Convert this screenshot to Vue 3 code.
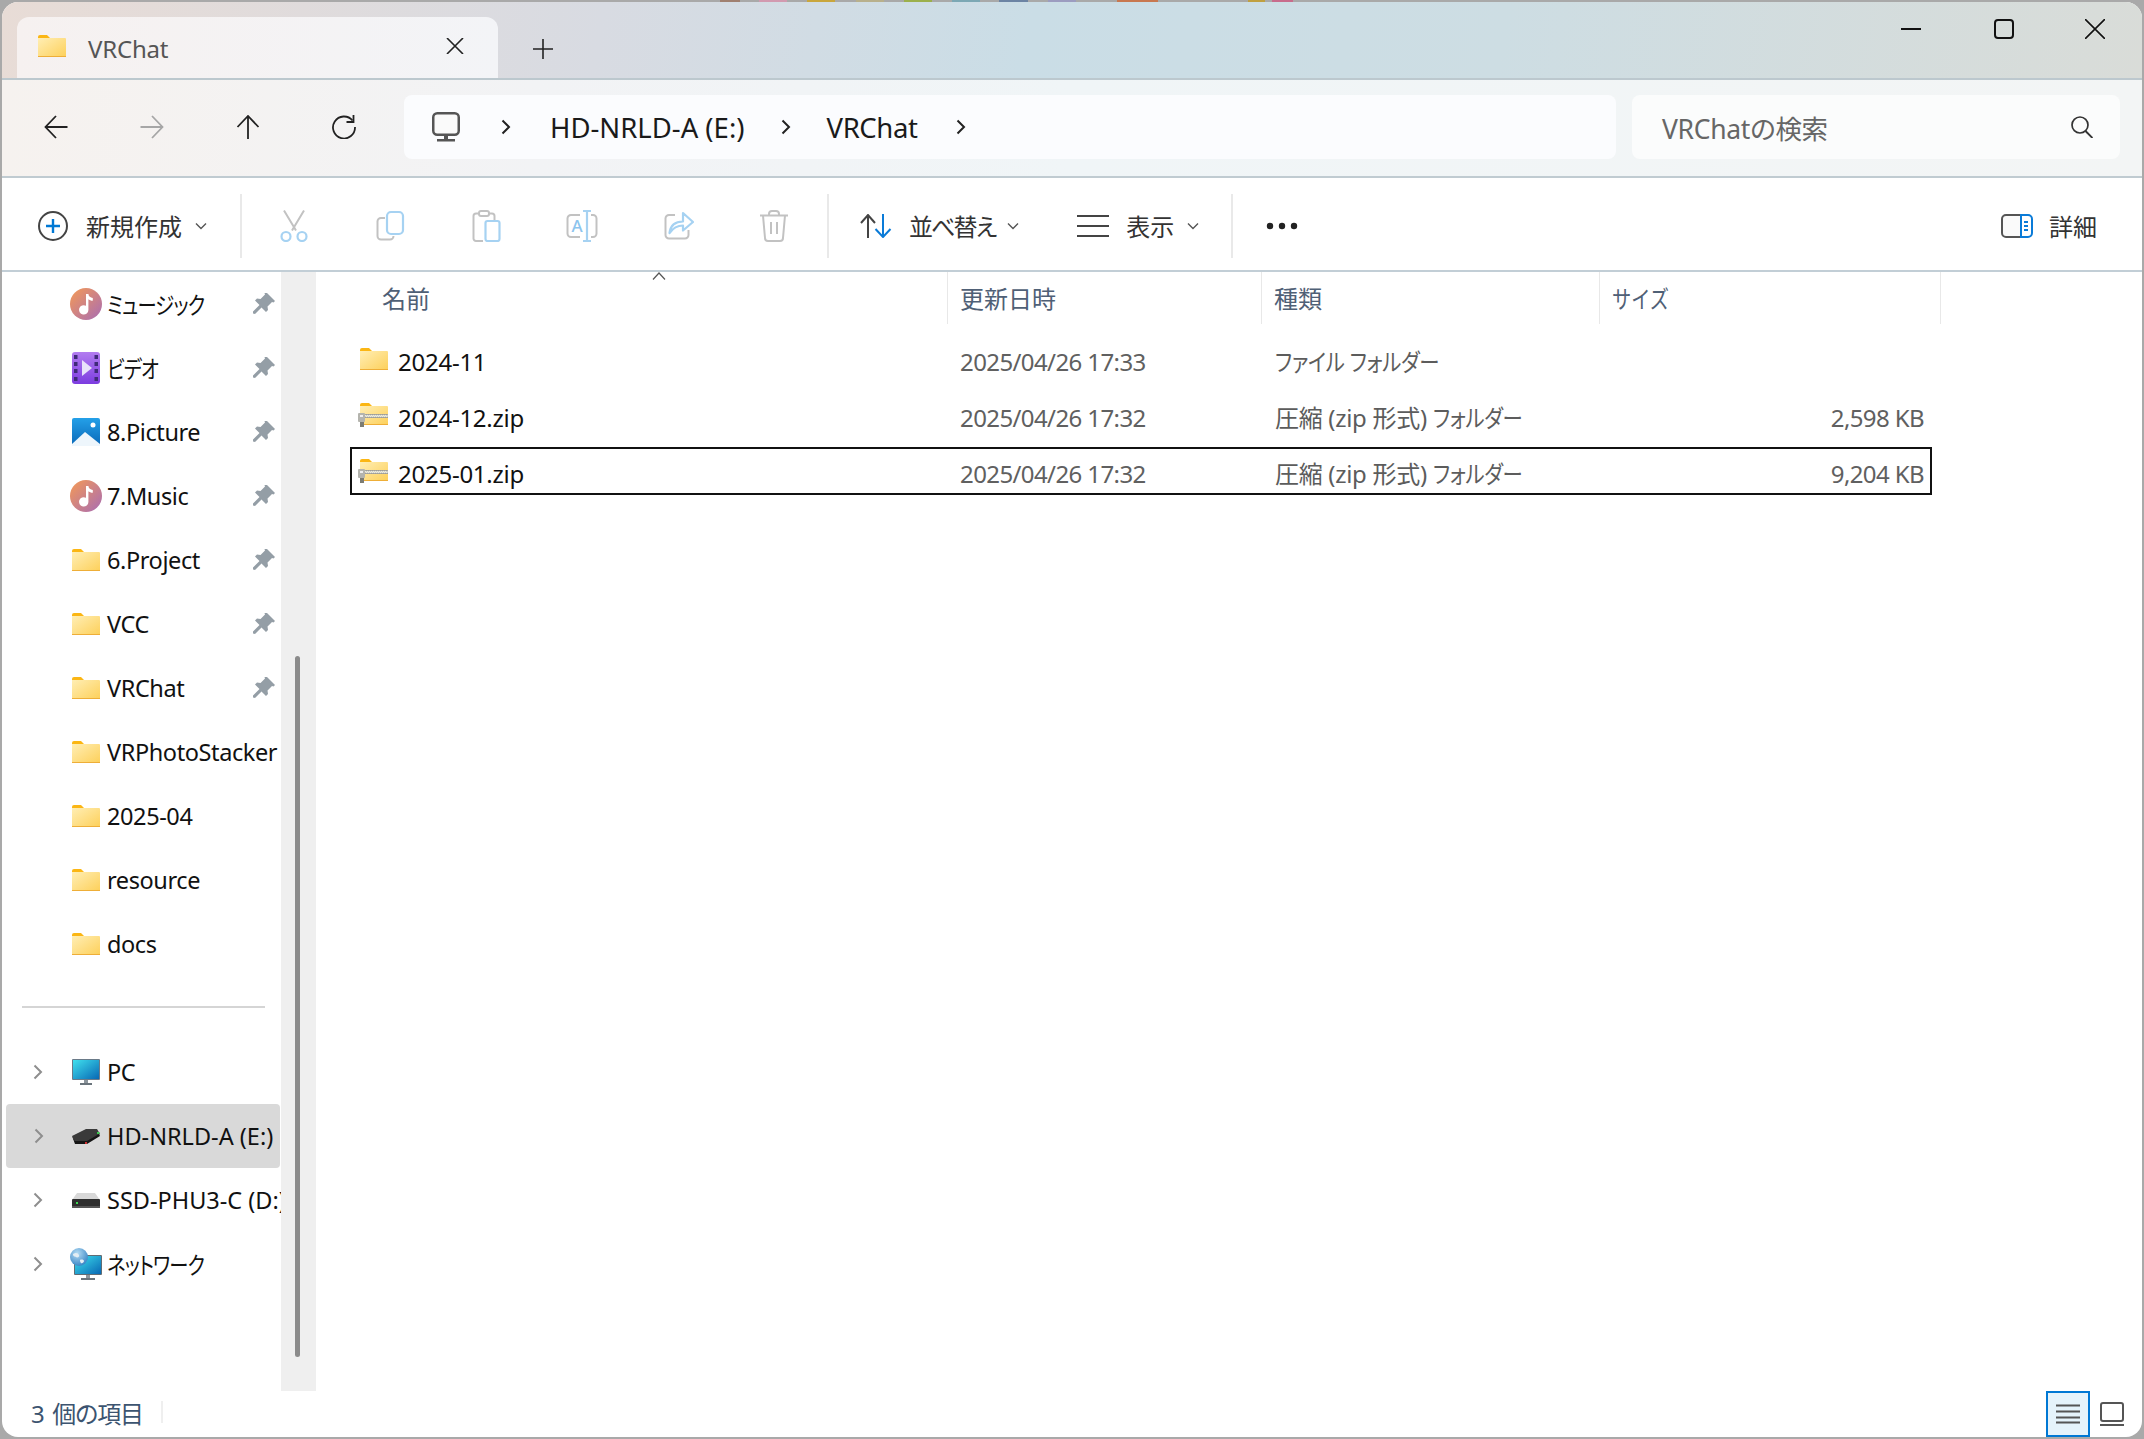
<script setup>
const slivers = [
  { w: 20, gap: 720, c: "#a08070" },
  { w: 28, gap: 19, c: "#d29ab0" },
  { w: 28, gap: 20, c: "#c9a63c" },
  { w: 28, gap: 21, c: "#b8b08c" },
  { w: 28, gap: 20, c: "#9cb04c" },
  { w: 28, gap: 20, c: "#7ca8b4" },
  { w: 29, gap: 19, c: "#6c84a4" },
  { w: 28, gap: 20, c: "#9c9cc0" },
  { w: 41, gap: 41, c: "#c87850" },
  { w: 17, gap: 90, c: "#c0a040" },
  { w: 21, gap: 7, c: "#c86c8c" },
];

const quick = [
  { name: "ミュージック", icon: "music", pin: true, cls: "kana" },
  { name: "ビデオ", icon: "video", pin: true, cls: "kana" },
  { name: "8.Picture", icon: "picture", pin: true },
  { name: "7.Music", icon: "music", pin: true },
  { name: "6.Project", icon: "folder", pin: true },
  { name: "VCC", icon: "folder", pin: true },
  { name: "VRChat", icon: "folder", pin: true },
  { name: "VRPhotoStacker", icon: "folder" },
  { name: "2025-04", icon: "folder" },
  { name: "resource", icon: "folder" },
  { name: "docs", icon: "folder" },
];

const drives = [
  { name: "PC", icon: "pc" },
  { name: "HD-NRLD-A (E:)", icon: "hdd", active: true, cls: "caps" },
  { name: "SSD-PHU3-C (D:)", icon: "ssd", cls: "caps" },
  { name: "ネットワーク", icon: "network", cls: "kana" },
];

const files = [
  { name: "2024-11", icon: "folder", date: "2025/04/26 17:33", typeHead: "", kana: "ファイル フォルダー", size: "" },
  { name: "2024-12.zip", icon: "zip", date: "2025/04/26 17:32", typeHead: "圧縮 (zip 形式)", kana: "フォルダー", size: "2,598 KB" },
  { name: "2025-01.zip", icon: "zip", date: "2025/04/26 17:32", typeHead: "圧縮 (zip 形式)", kana: "フォルダー", size: "9,204 KB", focus: true },
];
</script>

<template>
  <div class="desk">
    <div class="slivers">
      <span
        v-for="(s, i) in slivers"
        :key="i"
        :style="{ width: s.w + 'px', marginLeft: s.gap + 'px', background: s.c }"
      ></span>
    </div>

    <!-- shared icons -->
    <svg class="sprite" width="0" height="0">
      <defs>
        <linearGradient id="fold" x1="0" y1="0" x2="1" y2="1">
          <stop offset="0" stop-color="#ffeeb4" />
          <stop offset="1" stop-color="#fdd05a" />
        </linearGradient>
        <linearGradient id="mus" x1="0" y1="0" x2="1" y2="1">
          <stop offset="0" stop-color="#f59a55" />
          <stop offset="1" stop-color="#a86cb4" />
        </linearGradient>
        <linearGradient id="vid" x1="0" y1="0" x2="0" y2="1">
          <stop offset="0" stop-color="#b27cf0" />
          <stop offset="1" stop-color="#7c3ce0" />
        </linearGradient>
        <linearGradient id="pic" x1="0" y1="0" x2="0" y2="1">
          <stop offset="0" stop-color="#24a0e8" />
          <stop offset="1" stop-color="#0a68b8" />
        </linearGradient>
        <linearGradient id="scr" x1="0" y1="0" x2="1" y2="1">
          <stop offset="0" stop-color="#3fe0ee" />
          <stop offset="1" stop-color="#0868b4" />
        </linearGradient>
        <radialGradient id="globe" cx="0.4" cy="0.3" r="0.8">
          <stop offset="0" stop-color="#b4dcf4" />
          <stop offset="1" stop-color="#2c7cc0" />
        </radialGradient>
      </defs>
      <symbol id="folder" viewBox="0 0 28 22">
        <path d="M0 2a2 2 0 0 1 2-2h7l3 3h-12z" fill="#fbb614" />
        <path d="M0 3h27a1 1 0 0 1 1 1v17a1 1 0 0 1-1 1h-26a1 1 0 0 1-1-1z" fill="url(#fold)" />
        <rect y="21" width="28" height="1" fill="#eeae38" />
      </symbol>
      <symbol id="zip" viewBox="0 0 30 24">
        <path d="M2 2a2 2 0 0 1 2-2h7l3 3h-12z" fill="#fbb614" />
        <path d="M2 3h27a1 1 0 0 1 1 1v17a1 1 0 0 1-1 1h-26a1 1 0 0 1-1-1z" fill="url(#fold)" />
        <rect x="2" y="21" width="28" height="1" fill="#eeae38" />
        <rect x="6" y="11" width="24" height="4" fill="#a8a8a4" />
        <rect x="6" y="12" width="24" height="2" fill="#ecebdf" stroke="#7d7d78" stroke-dasharray="1 1" stroke-width=".5" />
        <rect x="0" y="10" width="7" height="9" rx="1" fill="#b4b4ae" />
        <rect x="2" y="19" width="4" height="5" fill="#7c7c74" />
        <rect x="2" y="12" width="3" height="2" fill="#eee" />
      </symbol>
      <symbol id="music" viewBox="0 0 32 32">
        <circle cx="16" cy="16" r="16" fill="url(#mus)" />
        <path d="M16 6h2.400c.3 2.600 2 3.600 4.400 4v2.800c-1.900 0-3.500-.6-4.400-1.500v10.600a4.700 4.700 0 1 1-2.400-4.100z" fill="#fff" />
      </symbol>
      <symbol id="video" viewBox="0 0 28 32">
        <rect width="28" height="32" rx="3" fill="url(#vid)" />
        <g fill="#3f2a78">
          <rect x="2" y="3" width="3.500" height="4" /><rect x="2" y="10" width="3.500" height="4" />
          <rect x="2" y="17" width="3.500" height="4" /><rect x="2" y="25" width="3.500" height="4" />
          <rect x="22.500" y="3" width="3.500" height="4" /><rect x="22.500" y="10" width="3.500" height="4" />
          <rect x="22.500" y="17" width="3.500" height="4" /><rect x="22.500" y="25" width="3.500" height="4" />
        </g>
        <path d="M10 8l10 8-10 8z" fill="#e8e2fa" />
      </symbol>
      <symbol id="picture" viewBox="0 0 28 28">
        <rect width="28" height="28" rx="2" fill="url(#pic)" />
        <circle cx="21" cy="7" r="2.500" fill="#fff" />
        <path d="M0 26L13 14l15 12v2H0z" fill="#eef6fc" />
      </symbol>
      <symbol id="pc" viewBox="0 0 28 26">
        <rect width="28" height="21" rx="1" fill="#6a7a88" />
        <rect x="1" y="1" width="26" height="19" fill="url(#scr)" />
        <rect x="12" y="21" width="4" height="3" fill="#8c959c" />
        <rect x="8" y="24" width="12" height="2" fill="#6a747c" />
      </symbol>
      <symbol id="hdd" viewBox="0 0 28 15">
        <path d="M0 7L14 0h11l3 5-12 8H3z" fill="#3a3a3a" />
        <path d="M0 7l3 8h12l13-8-1-2-12 7H3z" fill="#151515" />
        <rect x="25" y="3" width="2.500" height="2" fill="#3cc850" />
        <rect x="13" y="13" width="2" height="2" fill="#d03030" />
      </symbol>
      <symbol id="ssd" viewBox="0 0 28 15">
        <path d="M0 7L5 0h18l5 7z" fill="#d8d8d8" />
        <rect y="6" width="28" height="9" rx="1" fill="#2e2e2e" />
        <rect y="13" width="28" height="2" fill="#555" />
        <rect x="4" y="9" width="2" height="2" fill="#3cd850" />
      </symbol>
      <symbol id="network" viewBox="0 0 32 32">
        <rect x="4" y="7" width="28" height="20" rx="1" fill="#606c74" />
        <rect x="5" y="8" width="26" height="18" fill="url(#scr)" />
        <rect x="16" y="27" width="4" height="3" fill="#8c959c" />
        <rect x="11" y="30" width="14" height="2" fill="#6a747c" />
        <circle cx="9" cy="9" r="9" fill="url(#globe)" />
        <path d="M3 6c3-2 5-1 6 1s-2 3-3 2-3 0-3-3zM10 12c2-1 4 0 4 1s-2 3-3 2-1-2-1-3z" fill="#e4eef4" />
      </symbol>
      <symbol id="pin" viewBox="0 0 22 22">
        <path d="M14 0l8 8-1.500 1.500-1.500-.5-4.500 4.500.5 3.500-2 2-4.500-4.500-6.500 6.500-2-.5 0-2 6.500-6.500-4.500-4.500 2-2 3.500.5 4.500-4.500-.5-1.500z" fill="#949ea6" />
      </symbol>
      <symbol id="caret" viewBox="0 0 12 8">
        <path d="M1 1.500l5 5 5-5" fill="none" stroke="#555" stroke-width="1.400" />
      </symbol>
      <symbol id="chev" viewBox="0 0 12 16">
        <path d="M2.500 1.500L9 8l-6.500 6.500" fill="none" stroke="currentColor" stroke-width="2" />
      </symbol>
      <symbol id="arrow" viewBox="0 0 24 24">
        <path d="M1.500 12h22M12 1L1.500 12 12 23" fill="none" stroke="currentColor" stroke-width="1.800" />
      </symbol>
    </svg>

    <div class="window">
      <!-- tab strip -->
      <header class="titlebar">
        <div class="tab">
          <svg class="tab-icon"><use href="#folder" /></svg>
          <span class="tab-title">VRChat</span>
          <svg class="tab-close" viewBox="0 0 18 16">
            <path d="M1 0l16 16M17 0L1 16" stroke="#222" stroke-width="1.600" fill="none" />
          </svg>
        </div>
        <svg class="tab-plus" viewBox="0 0 20 20">
          <path d="M10 0v20M0 10h20" stroke="#222" stroke-width="1.600" />
        </svg>
        <div class="win-ctrls">
          <svg class="ctl-min" viewBox="0 0 20 2"><rect width="20" height="2" fill="#111" /></svg>
          <svg class="ctl-max" viewBox="0 0 20 20">
            <rect x="1" y="1" width="18" height="18" rx="3" fill="none" stroke="#111" stroke-width="2" />
          </svg>
          <svg class="ctl-close" viewBox="0 0 20 20">
            <path d="M0 0l20 20M20 0L0 20" stroke="#111" stroke-width="1.600" />
          </svg>
        </div>
      </header>

      <!-- back, forward, address, search -->
      <nav class="navbar">
        <svg class="nav-btn"><use href="#arrow" /></svg>
        <svg class="nav-btn off flip"><use href="#arrow" /></svg>
        <svg class="nav-btn" viewBox="0 0 24 24">
          <path d="M12 24V1M1.500 12L12 1l10.500 11" fill="none" stroke="currentColor" stroke-width="1.800" />
        </svg>
        <svg class="nav-btn" viewBox="0 0 24 24">
          <path d="M20.500 5.500A11 11 0 1 0 23 12" fill="none" stroke="currentColor" stroke-width="1.800" />
          <path d="M21.500 0v7h-7" fill="none" stroke="currentColor" stroke-width="1.800" />
        </svg>
        <div class="address">
          <svg class="pc-outline" viewBox="0 0 28 30">
            <rect x="1.250" y="1.250" width="25.500" height="21.500" rx="4" fill="#fafafa" stroke="#555" stroke-width="2.500" />
            <rect x="12" y="24" width="4" height="3" fill="#555" />
            <rect x="5" y="27" width="18" height="2.500" fill="#555" />
          </svg>
          <svg class="crumb-chev"><use href="#chev" /></svg>
          <span class="crumb crumb-drive">HD-NRLD-A (E:)</span>
          <svg class="crumb-chev"><use href="#chev" /></svg>
          <span class="crumb crumb-folder">VRChat</span>
          <svg class="crumb-chev"><use href="#chev" /></svg>
        </div>
        <div class="search">
          <span>VRChatの検索</span>
          <svg class="search-icon" viewBox="0 0 22 22">
            <circle cx="9" cy="9" r="8" fill="none" stroke="#333" stroke-width="1.700" />
            <path d="M14.500 15l7 7" stroke="#333" stroke-width="1.900" />
          </svg>
        </div>
      </nav>

      <!-- command bar -->
      <section class="toolbar">
        <svg class="new-icon" viewBox="0 0 30 30">
          <circle cx="15" cy="15" r="14" fill="none" stroke="#444" stroke-width="2" />
          <path d="M15 8v14M8 15h14" stroke="#0078d4" stroke-width="2.400" />
        </svg>
        <span class="tb-label new-label">新規作成</span>
        <svg class="caret"><use href="#caret" /></svg>
        <i class="tb-sep sep-a"></i>

        <div class="tb-icons">
          <svg viewBox="0 0 32 32">
            <path d="M6 .5l12 20M26 .5L14 20.500" stroke="#c2c2c2" stroke-width="2" fill="none" />
            <circle cx="8" cy="26.500" r="4.500" fill="none" stroke="#a6d2f2" stroke-width="2.200" />
            <circle cx="24" cy="26.500" r="4.500" fill="none" stroke="#a6d2f2" stroke-width="2.200" />
          </svg>
          <svg viewBox="0 0 32 32">
            <path d="M11 8H7a3.500 3.500 0 0 0-3.500 3.500V26a3.500 3.500 0 0 0 3.500 3.500h9a3.500 3.500 0 0 0 3.500-3.500" fill="none" stroke="#c2c2c2" stroke-width="2" />
            <rect x="13" y="2" width="16" height="22" rx="4" fill="#fff" stroke="#a6d2f2" stroke-width="2.200" />
          </svg>
          <svg viewBox="0 0 32 32">
            <path d="M13 31H6a2.500 2.500 0 0 1-2.500-2.500V6A2.500 2.500 0 0 1 6 3.500h3M19 3.500h3A2.500 2.500 0 0 1 24.500 6v4" fill="none" stroke="#c2c2c2" stroke-width="2" />
            <rect x="9" y="1" width="10" height="5" rx="2" fill="#fff" stroke="#c2c2c2" stroke-width="2" />
            <rect x="15.500" y="11" width="14" height="20" rx="2" fill="#fff" stroke="#a6d2f2" stroke-width="2.200" />
          </svg>
          <svg viewBox="0 0 32 32">
            <path d="M14 5H5a3.500 3.500 0 0 0-3.500 3.500v15A3.500 3.500 0 0 0 5 27h9M25 5h2a3.500 3.500 0 0 1 3.500 3.500v15A3.500 3.500 0 0 1 27 27h-2" fill="none" stroke="#c2c2c2" stroke-width="2" />
            <path d="M17 1h8M21 1v30M17 31h8" fill="none" stroke="#a6d2f2" stroke-width="2.200" />
            <text x="11" y="22" text-anchor="middle" class="rename-a">A</text>
          </svg>
          <svg viewBox="0 0 32 32">
            <path d="M13 5H7a3.500 3.500 0 0 0-3.500 3.500V25A3.500 3.500 0 0 0 7 28.500h16a3.500 3.500 0 0 0 3.500-3.500v-5" fill="none" stroke="#c2c2c2" stroke-width="2" />
            <path d="M7.500 23C8.500 15 14 11.500 21 11.500V3l10 9-10 8.500V15.500C15 15.500 11 18 7.500 23z" fill="#fff" stroke="#a6d2f2" stroke-width="2.200" stroke-linejoin="round" />
          </svg>
          <svg viewBox="0 0 32 32">
            <path d="M2 5.500h28M11 5.500V4a3 3 0 0 1 3-3h4a3 3 0 0 1 3 3v1.500M5 5.500L7 28a3 3 0 0 0 3 3h12a3 3 0 0 0 3-3l2-22.500M13 12v12M19 12v12" fill="none" stroke="#c2c2c2" stroke-width="2" />
          </svg>
        </div>
        <i class="tb-sep sep-b"></i>

        <svg class="sort-icon" viewBox="0 0 32 24">
          <path d="M8 24V1M1 9l7-8 7 8" fill="none" stroke="#444" stroke-width="2" />
          <path d="M23 0v23M15.500 15l7.500 8 7.500-8" fill="none" stroke="#0a7bd8" stroke-width="2" />
        </svg>
        <span class="tb-label sort-label">並べ替え</span>
        <svg class="caret"><use href="#caret" /></svg>
        <svg class="lines-icon" viewBox="0 0 32 22">
          <path d="M0 1h32M0 11h32M0 21h32" stroke="#444" stroke-width="2" />
        </svg>
        <span class="tb-label view-label">表示</span>
        <svg class="caret"><use href="#caret" /></svg>
        <i class="tb-sep sep-c"></i>
        <svg class="more-icon" viewBox="0 0 32 8">
          <circle cx="4" cy="4" r="3.200" fill="#222" /><circle cx="16" cy="4" r="3.200" fill="#222" /><circle cx="28" cy="4" r="3.200" fill="#222" />
        </svg>

        <svg class="detail-icon" viewBox="0 0 32 24">
          <path d="M20 1H5a4 4 0 0 0-4 4v14a4 4 0 0 0 4 4h15" fill="#fafafa" stroke="#555" stroke-width="2" />
          <path d="M20 1h7a4 4 0 0 1 4 4v14a4 4 0 0 1-4 4h-7z" fill="#fff" stroke="#0a7bd8" stroke-width="2" />
          <path d="M23 8h4M23 12h4M23 16h4" stroke="#0a7bd8" stroke-width="2" />
        </svg>
        <span class="tb-label detail-label">詳細</span>
      </section>

      <div class="content">
        <!-- navigation pane -->
        <aside class="sidebar">
          <div class="tree">
            <div v-for="q in quick" :key="q.name" class="tree-row" :class="q.cls">
              <span class="twisty"></span>
              <svg class="tree-icon" :class="'ic-' + q.icon"><use :href="'#' + q.icon" /></svg>
              <span class="tree-name">{{ q.name }}</span>
              <svg v-if="q.pin" class="pin"><use href="#pin" /></svg>
            </div>
            <div class="tree-sep"></div>
            <div v-for="d in drives" :key="d.name" class="tree-row" :class="[d.cls, { active: d.active }]">
              <span class="twisty"><svg class="twisty-chev"><use href="#chev" /></svg></span>
              <svg class="tree-icon" :class="'ic-' + d.icon"><use :href="'#' + d.icon" /></svg>
              <span class="tree-name">{{ d.name }}</span>
            </div>
          </div>
          <div class="scroll-track"><div class="scroll-thumb"></div></div>
        </aside>

        <!-- file list -->
        <main class="files">
          <div class="file-head">
            <div class="col-name">
              名前
              <svg class="sort-caret" viewBox="0 0 14 8"><path d="M1 7.500l6-6.500 6 6.500" fill="none" stroke="#555" stroke-width="1.200" /></svg>
            </div>
            <div class="col-date">更新日時</div>
            <div class="col-type">種類</div>
            <div class="col-size"><span class="narrow-head">サイズ</span></div>
          </div>
          <div class="file-rows">
            <div v-for="f in files" :key="f.name" class="file-row" :class="{ focus: f.focus }">
              <svg class="file-icon" :class="'fi-' + f.icon"><use :href="'#' + f.icon" /></svg>
              <span class="file-name">{{ f.name }}</span>
              <span class="file-date">{{ f.date }}</span>
              <span class="file-type">{{ f.typeHead }} <span class="narrow">{{ f.kana }}</span></span>
              <span class="file-size">{{ f.size }}</span>
            </div>
          </div>
        </main>
      </div>

      <footer class="status">
        <span class="status-count">3 個の項目</span>
        <i class="status-sep"></i>
        <div class="view-btn">
          <svg viewBox="0 0 24 20"><path d="M0 1.500h24M0 7.500h24M0 13.500h24M0 18.500h24" stroke="#555" stroke-width="2" /></svg>
        </div>
        <svg class="tile-icon" viewBox="0 0 24 24">
          <rect x="1" y="1" width="22" height="18" rx="2" fill="none" stroke="#555" stroke-width="2" />
          <path d="M0 23h24" stroke="#555" stroke-width="2" />
        </svg>
      </footer>
    </div>
  </div>
</template>

<style>
html,
body {
  margin: 0;
  background: #a9a9a9;
}
</style>

<style scoped>
.desk {
  position: relative;
  width: 2144px;
  height: 1439px;
  overflow: hidden;
  font-family: "Noto Sans", "Noto Sans CJK JP", sans-serif;
  font-size: 24px;
  color: #111;
}

.slivers {
  display: flex;
  height: 2px;
}
.slivers span {
  flex: none;
  height: 2px;
}

.sprite {
  position: absolute;
}

.window {
  margin: 0 2px;
  height: 1435px;
  display: flex;
  flex-direction: column;
  background: #fff;
  border-radius: 16px;
  overflow: hidden;
}

/* tab strip */
.titlebar {
  flex: none;
  height: 76px;
  display: flex;
  align-items: flex-start;
  border-bottom: 2px solid #bcc8ce;
  background: linear-gradient(100deg, #e8dcd6 0%, #d8dbe2 28%, #cadde6 48%, #cddde3 70%, #d9dcd8 100%);
}
.tab {
  width: 481px;
  height: 61px;
  margin: 15px 0 0 15px;
  display: flex;
  align-items: center;
  box-sizing: border-box;
  padding: 0 34px 0 21px;
  background: linear-gradient(90deg, #f6f1f0, #f3f4f7);
  border-radius: 12px 12px 0 0;
}
.tab-icon {
  width: 28px;
  height: 22px;
  margin-top: -3px;
}
.tab-title {
  margin-left: 22px;
  padding-top: 2px;
  color: #555;
  letter-spacing: -0.2px;
  flex: 1;
}
.tab-close {
  width: 18px;
  height: 16px;
  margin-top: -4px;
}
.tab-plus {
  width: 20px;
  height: 20px;
  margin: 37px 0 0 35px;
}
.win-ctrls {
  margin-left: auto;
  margin-top: 17px;
  height: 20px;
  display: flex;
  align-items: center;
}
.ctl-min {
  width: 20px;
  height: 2px;
  margin-right: 73px;
}
.ctl-max {
  width: 20px;
  height: 20px;
  margin-right: 71px;
}
.ctl-close {
  width: 20px;
  height: 20px;
  margin-right: 37px;
}

/* nav */
.navbar {
  flex: none;
  display: flex;
  align-items: center;
  padding-left: 42px;
  box-sizing: border-box;
  border-bottom: 2px solid #c0cbd1;
  height: 98px;
  padding-bottom: 2px;
  background: linear-gradient(90deg, #f6f2ef 0%, #f2f3f5 25%, #f0f5f7 50%, #f3f5f5 100%);
}
.nav-btn {
  width: 24px;
  height: 24px;
  flex: none;
  margin-right: 72px;
  color: #222;
}
.nav-btn.off {
  color: #a6a6a6;
}
.flip {
  transform: scaleX(-1);
}
.address {
  flex: none;
  width: 1212px;
  height: 64px;
  margin-left: -24px;
  display: flex;
  align-items: center;
  background: #fbfcfe;
  border-radius: 8px;
  box-sizing: border-box;
  padding-left: 28px;
}
.pc-outline {
  width: 28px;
  height: 30px;
  margin-right: 40px;
}
.crumb-chev {
  width: 12px;
  height: 16px;
  color: #222;
  flex: none;
}
.crumb {
  font-size: 27.500px;
  color: #1a1a1a;
  flex: none;
}
.crumb-drive {
  margin: 0 35px 0 38px;
}
.crumb-folder {
  margin: 0 38px 0 35px;
  letter-spacing: -0.4px;
}
.search {
  flex: none;
  width: 488px;
  height: 64px;
  margin-left: 16px;
  display: flex;
  align-items: center;
  justify-content: space-between;
  box-sizing: border-box;
  padding: 0 27px 0 30px;
  background: #fbfcfc;
  border-radius: 8px;
  color: #666;
  font-size: 26.500px;
  letter-spacing: -0.3px;
  font-feature-settings: "palt";
}
.search-icon {
  width: 22px;
  height: 22px;
}

/* command bar */
.toolbar {
  flex: none;
  height: 94px;
  box-sizing: border-box;
  border-bottom: 2px solid #c2ced6;
  display: flex;
  align-items: center;
  padding: 4px 0 0 36px;
  color: #333;
}
.new-icon {
  width: 30px;
  height: 30px;
  flex: none;
}
.tb-label {
  flex: none;
  font-size: 24px;
  line-height: 32px;
  padding-top: 1px;
  color: #333;
}
.new-label {
  margin-left: 18px;
}
.caret {
  width: 12px;
  height: 8px;
  margin-left: 13px;
  flex: none;
}
.tb-sep {
  flex: none;
  width: 2px;
  height: 64px;
  background: #e9e9e9;
}
.sep-a {
  margin-left: 33px;
}
.tb-icons {
  flex: none;
  display: flex;
  gap: 64px;
  margin-left: 36px;
}
.tb-icons svg {
  width: 32px;
  height: 32px;
}
.rename-a {
  font-size: 17px;
  fill: #8cc4ee;
  font-weight: 500;
}
.sep-b {
  margin-left: 37px;
}
.sort-icon {
  flex: none;
  width: 32px;
  height: 24px;
  margin-left: 31px;
}
.sort-label {
  margin-left: 17px;
  font-feature-settings: "palt";
  letter-spacing: -2px;
}
.sort-label + .caret {
  margin-left: 12px;
}
.lines-icon {
  flex: none;
  width: 32px;
  height: 22px;
  margin-left: 58px;
}
.view-label {
  margin-left: 17px;
}
.sep-c {
  margin-left: 32px;
}
.more-icon {
  flex: none;
  width: 32px;
  height: 8px;
  margin-left: 33px;
}
.detail-icon {
  flex: none;
  width: 32px;
  height: 24px;
  margin-left: auto;
}
.detail-label {
  margin-left: 16px;
  margin-right: 45px;
}

/* body */
.content {
  flex: 1;
  min-height: 0;
  display: flex;
}
.sidebar {
  flex: none;
  width: 312px;
  display: flex;
  border-right: 2px solid #efefef;
}
.tree {
  flex: none;
  width: 279px;
  overflow: hidden;
}
.tree-row {
  height: 64px;
  display: flex;
  align-items: center;
  white-space: nowrap;
  overflow: hidden;
  position: relative;
}
.tree-row.kana .tree-name {
  display: inline-block;
  font-feature-settings: "palt";
  letter-spacing: -1px;
  transform: scaleX(0.82);
  transform-origin: left center;
}
.tree-row.caps .tree-name {
  letter-spacing: 0;
}
.tree-row.active {
  background: #d9d9d9;
  border-radius: 4px;
  margin-left: 4px;
  margin-right: 1px;
}
.tree-row.active .twisty {
  width: 66px;
  padding-left: 27px;
}
.twisty {
  flex: none;
  width: 70px;
  box-sizing: border-box;
  padding-left: 30px;
  display: flex;
  align-items: center;
}
.twisty-chev {
  width: 12px;
  height: 16px;
  color: #8e8e8e;
}
.tree-icon {
  flex: none;
  width: 28px;
  height: 22px;
  margin-right: 7px;
}
.ic-music {
  width: 32px;
  height: 32px;
  margin-left: -2px;
  margin-right: 5px;
}
.ic-video {
  height: 32px;
}
.ic-picture {
  height: 28px;
}
.ic-pc {
  height: 26px;
}
.ic-hdd,
.ic-ssd {
  height: 15px;
}
.ic-network {
  width: 32px;
  height: 32px;
  margin-left: -2px;
  margin-right: 5px;
}
.tree-name {
  flex: none;
  font-size: 23.500px;
  letter-spacing: -0.4px;
}
.pin {
  position: absolute;
  left: 251px;
  top: 21px;
  width: 22px;
  height: 22px;
}
.tree-sep {
  height: 2px;
  margin: 30px 0 32px 20px;
  width: 243px;
  background: #d5d5d5;
}
.scroll-track {
  flex: none;
  width: 33px;
  background: #efefef;
  position: relative;
}
.scroll-thumb {
  position: absolute;
  left: 14px;
  top: 384px;
  width: 5px;
  height: 701px;
  border-radius: 3px;
  background: #8b8b8b;
}

.files {
  flex: 1;
  min-width: 0;
}
.file-head {
  height: 52px;
  display: flex;
  align-items: center;
  color: #4f6076;
}
.file-head > div {
  height: 100%;
  display: flex;
  align-items: center;
  box-sizing: border-box;
  border-right: 1px solid #e8e8e8;
  padding-left: 12px;
  padding-bottom: 2px;
  flex: none;
}
.col-name {
  width: 632px;
  padding-left: 66px !important;
  position: relative;
}
.sort-caret {
  position: absolute;
  left: 336px;
  top: 0;
  width: 14px;
  height: 8px;
}
.col-date {
  width: 314px;
}
.col-type {
  width: 338px;
}
.col-size {
  width: 341px;
}
.narrow-head {
  display: inline-block;
  transform: scaleX(0.8);
  transform-origin: left center;
}
.file-rows {
  padding-top: 11px;
  display: flex;
  flex-direction: column;
  gap: 8px;
}
.file-row {
  width: 1582px;
  height: 48px;
  margin-left: 34px;
  box-sizing: border-box;
  border: 2px solid transparent;
  display: flex;
  align-items: center;
  white-space: nowrap;
}
.file-row > span {
  padding-top: 4px;
}
.file-row > .file-type {
  padding-top: 2px;
}
.file-row.focus {
  border-color: #111;
}
.file-icon {
  flex: none;
}
.fi-folder {
  width: 28px;
  height: 22px;
  margin-left: 8px;
}
.fi-zip {
  width: 30px;
  height: 24px;
  margin-left: 6px;
}
.file-name {
  flex: none;
  width: 562px;
  margin-left: 10px;
  letter-spacing: -0.25px;
}
.file-date {
  flex: none;
  width: 315px;
  color: #606060;
  letter-spacing: -0.6px;
}
.file-type {
  flex: none;
  width: 500px;
  color: #5c5c5c;
  font-feature-settings: "palt";
  letter-spacing: -0.3px;
}
.narrow {
  display: inline-block;
  transform: scaleX(0.85);
  transform-origin: left center;
}
.file-size {
  flex: 1;
  text-align: right;
  padding-right: 6px;
  color: #606060;
  letter-spacing: -0.6px;
}

/* status bar */
.status {
  flex: none;
  height: 46px;
  display: flex;
  align-items: center;
  padding-left: 29px;
  color: #3c5470;
}
.status-count {
  width: 130px;
  padding-bottom: 4px;
  letter-spacing: -1.4px;
  word-spacing: 4px;
}
.status-sep {
  width: 2px;
  height: 22px;
  background: #efefef;
  margin-bottom: 4px;
}
.view-btn {
  width: 44px;
  height: 46px;
  box-sizing: border-box;
  margin-left: auto;
  border: 2px solid #0078d4;
  background: #e5f3fb;
  display: flex;
  align-items: center;
  justify-content: center;
}
.view-btn svg {
  width: 24px;
  height: 20px;
}
.tile-icon {
  width: 24px;
  height: 24px;
  margin: 0 18px 0 10px;
}
</style>
